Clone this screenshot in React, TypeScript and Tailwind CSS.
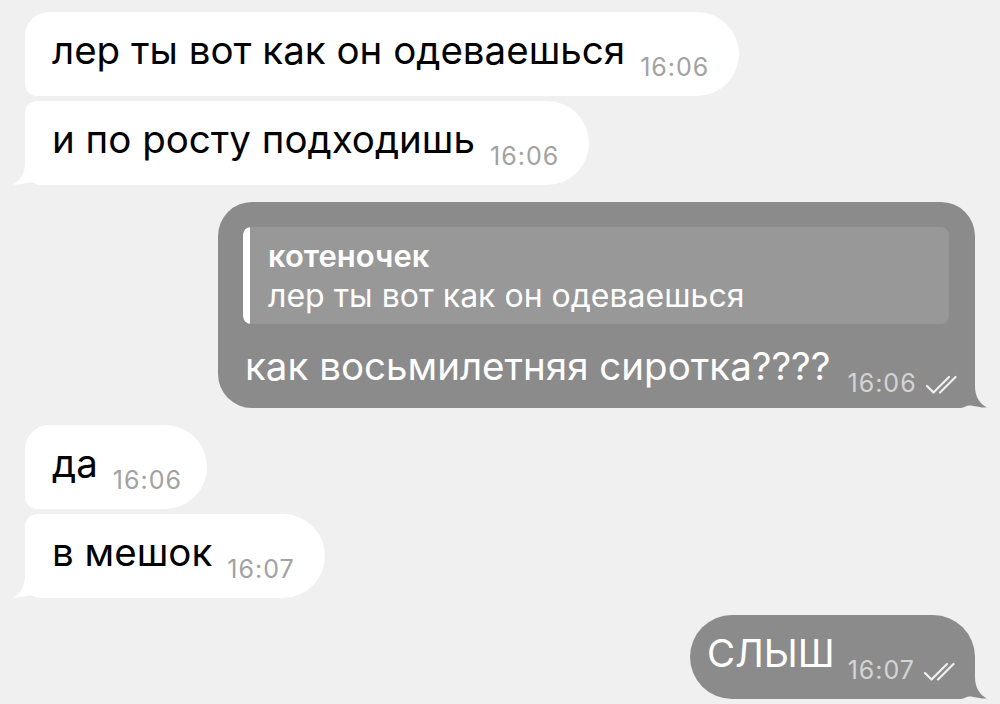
import React from "react";

const font = { fontFamily: "Inter, 'Noto Sans', 'Liberation Sans', sans-serif" };

function TailLeft() {
  return (
    <svg
      className="absolute left-[-12px] bottom-0 w-[30px] h-[30px]"
      viewBox="0 0 30 30"
      fill="#ffffff"
    >
      <path d="M12 0 H30 V30 H28 C24 28.5 20 27 16 27.5 C10 28.5 5 30 0 29.5 C7 26 12 19 12 8 Z" />
    </svg>
  );
}

function TailRight({ color }: { color: string }) {
  return (
    <svg
      className="absolute right-[-12px] bottom-0 w-[30px] h-[30px] -scale-x-100"
      viewBox="0 0 30 30"
      fill={color}
    >
      <path d="M12 0 H30 V30 H28 C24 28.5 20 27 16 27.5 C10 28.5 5 30 0 29.5 C7 26 12 19 12 8 Z" />
    </svg>
  );
}

function Checks() {
  return (
    <svg
      width="32"
      height="20"
      viewBox="0 0 32 20"
      fill="none"
      stroke="#f0f0f0"
      strokeWidth="2.2"
      strokeLinecap="round"
      strokeLinejoin="round"
      className="block"
    >
      <path d="M2 11 L8.5 17.5 L24 2" />
      <path d="M15 17.5 L30.5 2" />
    </svg>
  );
}

function InTime({ t }: { t: string }) {
  return (
    <span className="inline-block ml-[15px] text-[25px] leading-none text-[#a2a2a2] align-[-12px] tracking-[1px]">
      {t}
    </span>
  );
}

function OutTime({ t, gap }: { t: string; gap: string }) {
  return (
    <span className={"inline-flex items-end align-[-12px] leading-none " + gap}>
      <span className="text-[25px] text-[#d4d4d4] tracking-[1px]">{t}</span>
      <span className="ml-[8px] mb-[1px]">
        <Checks />
      </span>
    </span>
  );
}

function In({
  text,
  time,
  cls,
  tail,
}: {
  text: string;
  time: string;
  cls: string;
  tail?: boolean;
}) {
  return (
    <div
      className={
        "relative bg-white h-[84px] pl-[27px] leading-[76px] text-[38.5px] text-black whitespace-nowrap " +
        cls
      }
    >
      {text}
      <InTime t={time} />
      {tail && <TailLeft />}
    </div>
  );
}

export default function App() {
  return (
    <div
      className="w-[1000px] h-[704px] overflow-hidden bg-[#f0f0f0] flex flex-col pt-[12px] px-[25px]"
      style={font}
    >
      <div className="flex flex-col items-start gap-[5px]">
        <In
          text="лер ты вот как он одеваешься"
          time="16:06"
          cls="rounded-tl-[24px] rounded-bl-[12px] rounded-r-[42px] pr-[30px]"
        />
        <In
          text="и по росту подходишь"
          time="16:06"
          cls="rounded-tl-[12px] rounded-bl-[16px] rounded-r-[42px] pr-[30px]"
          tail
        />
      </div>

      <div className="flex justify-end mt-[17px]">
        <div className="relative w-[757px] bg-[#8b8b8b] rounded-l-[34px] rounded-tr-[34px] rounded-br-[16px] pt-[25px] pl-[25px] pr-[26px] text-white">
          <div className="flex h-[97px] rounded-[8px] bg-[#989898] overflow-hidden">
            <div className="w-[7px] bg-white rounded-l-[8px]" />
            <div className="pl-[18px] pt-[10px] flex flex-col whitespace-nowrap">
              <span className="text-[31px] font-semibold leading-[38px]">котеночек</span>
              <span className="text-[32px] leading-[42px]">лер ты вот как он одеваешься</span>
            </div>
          </div>
          <div className="whitespace-nowrap text-[38.5px] leading-[84px] pl-[2px]">
            как восьмилетняя сиротка????
            <OutTime t="16:06" gap="ml-[17px]" />
          </div>
          <TailRight color="#8b8b8b" />
        </div>
      </div>

      <div className="flex flex-col items-start gap-[5px] mt-[17px]">
        <In
          text="да"
          time="16:06"
          cls="rounded-tl-[24px] rounded-bl-[12px] rounded-r-[42px] pr-[25px]"
        />
        <In
          text="в мешок"
          time="16:07"
          cls="rounded-tl-[12px] rounded-bl-[16px] rounded-r-[42px] pr-[30px]"
          tail
        />
      </div>

      <div className="flex justify-end mt-[17px]">
        <div className="relative h-[84px] bg-[#8b8b8b] rounded-l-[42px] rounded-tr-[42px] rounded-br-[16px] pl-[17px] pr-[20px] text-white text-[38.5px] leading-[76px] whitespace-nowrap">
          СЛЫШ
          <OutTime t="16:07" gap="ml-[13px]" />
          <TailRight color="#8b8b8b" />
        </div>
      </div>
    </div>
  );
}
